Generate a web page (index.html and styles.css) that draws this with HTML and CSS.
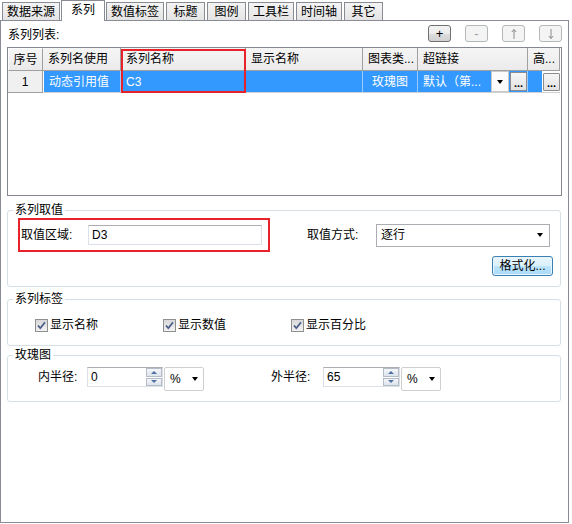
FILE: index.html
```html
<!DOCTYPE html>
<html>
<head>
<meta charset="utf-8">
<title>系列</title>
<link rel="stylesheet" href="styles.css">
</head>
<body>
<div class="win">
  <div class="tabs">
    <div class="tab">数据来源</div>
    <div class="tab sel">系列</div>
    <div class="tab">数值标签</div>
    <div class="tab">标题</div>
    <div class="tab">图例</div>
    <div class="tab">工具栏</div>
    <div class="tab">时间轴</div>
    <div class="tab">其它</div>
  </div>
  <div class="panel">
    <div class="listbar">
      <span class="listlbl">系列列表:</span>
      <div class="tools">
        <button class="tbtn on">+</button>
        <button class="tbtn off">-</button>
        <button class="tbtn off"><svg width="8" height="12" viewBox="0 0 8 12"><path d="M4 11V1.5M1.8 4L4 1.5 6.2 4" fill="none" stroke="#8a8a8a" stroke-width="1"/></svg></button>
        <button class="tbtn off"><svg width="8" height="12" viewBox="0 0 8 12"><path d="M4 1V10.5M1.8 8L4 10.5 6.2 8" fill="none" stroke="#8a8a8a" stroke-width="1"/></svg></button>
      </div>
    </div>
    <div class="grid">
      <div class="grow ghead">
        <div class="gc rh">序号</div>
        <div class="gc">系列名使用</div>
        <div class="gc">系列名称</div>
        <div class="gc">显示名称</div>
        <div class="gc">图表类...</div>
        <div class="gc">超链接</div>
        <div class="gc">高...</div>
      </div>
      <div class="grow gdata">
        <div class="gc rh">1</div>
        <div class="gc sel first">动态引用值</div>
        <div class="gc sel">C3</div>
        <div class="gc sel"></div>
        <div class="gc sel ctr">玫瑰图</div>
        <div class="gc sel link"><span class="ltext">默认（第...</span><span class="ddbtn"><i class="tri"></i></span><span class="dots">...</span></div>
        <div class="gc sel high"><span class="hblank"></span><span class="dots">...</span></div>
      </div>
      <div class="mark"></div>
    </div>

    <fieldset class="grp g1">
      <legend>系列取值</legend>
      <div class="gb1">
        <div class="g1row">
          <div class="redzone">
            <span>取值区域:</span>
            <div class="tbox">D3</div>
          </div>
          <span class="modelbl">取值方式:</span>
          <div class="select"><span>逐行</span><i class="tri"></i></div>
        </div>
        <div class="g1row2">
          <button class="fmtbtn">格式化...</button>
        </div>
      </div>
    </fieldset>

    <fieldset class="grp g2">
      <legend>系列标签</legend>
      <div class="cbrow">
        <label class="cb"><span class="box"><svg width="11" height="11" viewBox="0 0 11 11"><path d="M2 5.5L4.3 8.2 9 2.3" fill="none" stroke="#4a5e8c" stroke-width="1.8"/></svg></span>显示名称</label>
        <label class="cb"><span class="box"><svg width="11" height="11" viewBox="0 0 11 11"><path d="M2 5.5L4.3 8.2 9 2.3" fill="none" stroke="#4a5e8c" stroke-width="1.8"/></svg></span>显示数值</label>
        <label class="cb"><span class="box"><svg width="11" height="11" viewBox="0 0 11 11"><path d="M2 5.5L4.3 8.2 9 2.3" fill="none" stroke="#4a5e8c" stroke-width="1.8"/></svg></span>显示百分比</label>
      </div>
    </fieldset>

    <fieldset class="grp g3">
      <legend>玫瑰图</legend>
      <div class="rrow">
        <span class="rlbl">内半径:</span>
        <div class="spin"><span class="sval">0</span><span class="sbtns"><span class="sb"><i class="tu"></i></span><span class="sb"><i class="td"></i></span></span></div>
        <div class="combo"><span>%</span><i class="tri"></i></div>
        <span class="rlbl r2">外半径:</span>
        <div class="spin s2"><span class="sval">65</span><span class="sbtns"><span class="sb"><i class="tu"></i></span><span class="sb"><i class="td"></i></span></span></div>
        <div class="combo"><span>%</span><i class="tri"></i></div>
      </div>
    </fieldset>
  </div>
</div>
</body>
</html>
```

FILE: styles.css
```css
* { box-sizing: border-box; }
html, body { margin: 0; padding: 0; }
body {
  width: 572px;
  height: 524px;
  overflow: hidden;
  background: #fff;
  color: #000;
  font-family: "Liberation Sans", "Noto Sans CJK SC", sans-serif;
  font-size: 12px;
  line-height: 14px;
}
.win { width: 572px; height: 524px; display: flex; flex-direction: column; }

/* tabs */
.tabs { height: 20px; display: flex; align-items: flex-end; padding-left: 2px; }
.tab {
  height: 18px;
  line-height: 17px;
  padding: 1px 4px 0;
  min-width: 39px;
  text-align: center;
  white-space: nowrap;
  border: 1px solid #898c95;
  border-bottom: none;
  background: linear-gradient(#f4f4f4, #e4e4e4);
  margin-right: 2px;
}
.tab.sel {
  height: 21px;
  line-height: 18px;
  padding: 0 9px;
  margin: 0 1px -1px -1px;
  background: #fff;
  position: relative;
  z-index: 1;
}

/* panel */
.panel {
  width: 569px;
  height: 503px;
  border: 1px solid #898c95;
  padding: 4px 6px 0 6px;
  display: flex;
  flex-direction: column;
}
.listbar { display: flex; align-items: flex-end; justify-content: space-between; height: 17px; }
.listlbl { margin-left: 1px; }
.tools { display: flex; gap: 14px; }
.tbtn {
  width: 23px; height: 17px; padding: 0; margin: 0;
  border-radius: 3px;
  font-family: "Liberation Sans", sans-serif; font-size: 13px;
  display: flex; align-items: center; justify-content: center; line-height: 1;
}
.tbtn.on { border: 1px solid #707070; background: linear-gradient(#f3f3f3 0, #ebebeb 50%, #dddddd 51%, #d2d2d2 100%); color: #000; }
.tbtn.off { border: 1px solid #b4b8bb; background: #f4f4f4; color: #9a9a9a; }

/* grid */
.grid {
  margin-top: 5px;
  height: 149px;
  border: 1px solid #828790;
  position: relative;
  background: #fff;
}
.grow { display: grid; grid-template-columns: 35px 78px 125px 117px 55px 110px 32px; }
.ghead { height: 23px; }
.gdata { height: 22px; }
.gc {
  display: flex; align-items: center;
  padding: 0 5px;
  white-space: nowrap; overflow: hidden;
  border-right: 1px solid #a0a0a0;
  border-bottom: 1px solid #a0a0a0;
}
.ghead .gc { background: linear-gradient(#f5f5f5, #ebebeb); }
.ghead .gc.rh { border-top: 1px solid #fff; border-left: 1px solid #fff; }
.rh { justify-content: center; padding: 0; background: #f0f0f0; }
.gdata .gc { border-bottom-color: #d0d0d0; }
.gdata .rh { border-bottom-color: #a0a0a0; }
.gc.sel { background: #3399ff; color: #fff; border-right-color: #9ccbfb; }
.gc.first { border-left: 1px solid #fff; }
.gc.ctr { justify-content: center; }
.gc.link { padding: 0; }
.ltext { flex: 1; padding-left: 5px; overflow: hidden; }
.ddbtn {
  width: 18px; height: 21px;
  background: #fbfbfb;
  border: 1px solid #c8c8c8;
  display: flex; align-items: center; justify-content: center;
}
.dots {
  width: 17px; height: 19px; margin: 0 0 0 1px;
  background: linear-gradient(#f6f6f6, #e2e2e2);
  border: 1px solid #8c8c8c;
  border-radius: 1px;
  color: #000;
  font-weight: bold;
  font-size: 11px;
  display: flex; align-items: flex-end; justify-content: center;
  line-height: 13px;
}
.gc.high { padding: 0; background: #fff; border-right: none; }
.hblank { width: 14px; height: 100%; background: #3399ff; }
.gc.high .dots { margin-left: 1px; height: 18px; }
.tri {
  display: inline-block; width: 0; height: 0;
  border-left: 3.5px solid transparent;
  border-right: 3.5px solid transparent;
  border-top: 4px solid #000;
}
.mark {
  position: absolute;
  left: 113px; top: 1px;
  width: 125px; height: 44px;
  border: 2px solid #e8222a;
  pointer-events: none;
}

/* group boxes */
.grp {
  margin: 0 1px 0 0;
  padding: 0;
  min-width: 0;
  border: 1px solid #d5dfe5;
  border-radius: 3px;
}
.grp legend { margin-left: 5px; padding: 0 2px; line-height: 14px; }
.g1 { margin-top: 7px; }
.gb1 { padding: 1px 7px 10px 10px; }
.g1row { display: flex; align-items: center; }
.redzone {
  width: 252px; height: 34px;
  border: 2px solid #e8222a;
  display: flex; align-items: center; justify-content: space-between;
  padding: 0 6px 0 1px;
}
.tbox {
  width: 174px; height: 20px;
  border: 1px solid #dbdfe6; border-top-color: #abadb3;
  padding-left: 3px; line-height: 18px;
}
.modelbl { margin-left: 37px; width: 69px; }
.select {
  width: 174px; height: 23px;
  border: 1px solid #abadb3;
  background: #fff;
  display: flex; align-items: center; justify-content: space-between;
  padding: 0 6px 0 4px;
  margin-right: 3px;
}
.g1row2 { display: flex; justify-content: flex-end; margin-top: 4px; }
.fmtbtn {
  width: 61px; height: 20px; padding: 0; margin: 0;
  font: inherit;
  border: 1px solid #3c7fb1;
  border-radius: 3px;
  background: linear-gradient(#eaf6fd 0, #d9f0fc 50%, #bee6fd 51%, #a7d9f5 100%);
  box-shadow: inset 0 0 0 1px #e8f6fe;
  color: #000;
}
.g2 { margin-top: 5px; }
.cbrow { display: flex; padding: 12px 0 13px 27px; }
.cb { display: flex; align-items: center; width: 128px; height: 14px; }
.box {
  width: 13px; height: 13px; margin-right: 2px;
  border: 1px solid #8e8f8f;
  background: linear-gradient(#d8d8d8, #f2f2f2);
  display: flex; align-items: center; justify-content: center;
}
.g3 { margin-top: 2px; }
.rrow { display: flex; align-items: flex-start; padding: 5px 0 10px 30px; }
.rlbl { width: 49px; line-height: 20px; }
.rlbl.r2 { margin-left: 67px; width: 52px; }
.spin {
  width: 76px; height: 20px;
  border: 1px solid #dbdfe6; border-top-color: #abadb3;
  display: flex;
}
.spin.s2 { width: 77px; }
.sval { flex: 1; padding-left: 3px; line-height: 18px; }
.sbtns { width: 16px; display: flex; flex-direction: column; gap: 1px; }
.sb {
  flex: 1;
  border: 1px solid #b5bcc7;
  background: linear-gradient(#f4f6f9, #dde4ec);
  display: flex; align-items: center; justify-content: center;
}
.tu, .td { display: block; width: 0; height: 0; border-left: 3px solid transparent; border-right: 3px solid transparent; }
.tu { border-bottom: 3px solid #4f6fa3; }
.td { border-top: 3px solid #4f6fa3; }
.combo {
  width: 40px; height: 24px; margin-left: 1px;
  border: 1px solid #cfcfcf;
  border-radius: 2px;
  background: #fff;
  display: flex; align-items: center; justify-content: space-between;
  padding: 0 5px 0 5px;
}
```
